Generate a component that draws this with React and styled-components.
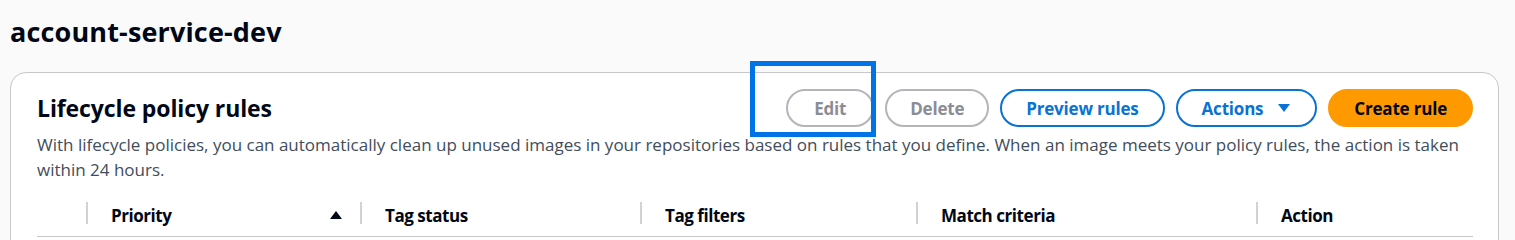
import React from 'react'
import styled, { createGlobalStyle } from 'styled-components'

const GlobalStyle = createGlobalStyle`
  body {
    margin: 0;
    background: #fafafa;
    font-family: "Open Sans", "Noto Sans", sans-serif;
    color: #000716;
  }
`

const columns = [
  { label: '', width: 49 },
  { label: 'Priority', width: 274, sorted: true },
  { label: 'Tag status', width: 280 },
  { label: 'Tag filters', width: 276 },
  { label: 'Match criteria', width: 340 },
  { label: 'Action' },
]

const App = () => {
  return (
    <Page>
      <GlobalStyle />
      <PageTitle>account-service-dev</PageTitle>
      <Card>
        <CardHeader>
          <HeaderTitle>Lifecycle policy rules</HeaderTitle>
          <Actions>
            <FocusWrap>
              <Button disabled pad={26}>Edit</Button>
              <FocusRing />
            </FocusWrap>
            <Button disabled pad={23}>Delete</Button>
            <Button>Preview rules</Button>
            <Button>
              Actions
              <Caret viewBox="0 0 14 10">
                <path d="M1 1h12L7 9z" fill="currentColor" />
              </Caret>
            </Button>
            <Button primary>Create rule</Button>
          </Actions>
        </CardHeader>
        <Description>
          With lifecycle policies, you can automatically clean up unused images in your repositories based on rules that you define. When an image meets your policy rules, the action is taken within 24 hours.
        </Description>
        <Table>
          {columns.map((col, i) => (
            <HeadCell key={i} width={col.width} divider={i > 0}>
              {col.label}
              {col.sorted && (
                <SortIcon viewBox="0 0 14 10">
                  <path d="M7 1l6 8H1z" fill="currentColor" />
                </SortIcon>
              )}
            </HeadCell>
          ))}
        </Table>
      </Card>
    </Page>
  )
}

const Page = styled.div`
  padding: 13px 16px 0 10px;
`

const PageTitle = styled.h1`
  margin: 0 0 22px;
  font-size: 27px;
  line-height: 37px;
  font-weight: 700;
  letter-spacing: 0.15px;
`

const Card = styled.div`
  background: #fff;
  border: 1px solid #c6c6cd;
  border-radius: 16px;
  padding: 16px 25px 0 26px;
  height: 200px;
`

const CardHeader = styled.div`
  display: flex;
  align-items: center;
  justify-content: space-between;
`

const HeaderTitle = styled.h2`
  margin: 0;
  font-size: 23px;
  font-weight: 700;
  letter-spacing: -0.1px;
`

const Actions = styled.div`
  display: flex;
  align-items: center;
  gap: 11px;
`

const FocusWrap = styled.div`
  position: relative;
  display: flex;
`

const FocusRing = styled.div`
  position: absolute;
  left: -36px;
  top: -28px;
  width: 116px;
  height: 66px;
  border: 5px solid #0073e6;
  pointer-events: none;
`

const Button = styled.button`
  display: inline-flex;
  align-items: center;
  gap: 14px;
  height: 38px;
  padding: 0 ${p => p.pad || 24}px;
  border-radius: 20px;
  font-family: inherit;
  font-size: 17px;
  font-weight: 700;
  letter-spacing: -0.2px;
  cursor: pointer;
  border: 2px solid ${p => (p.disabled ? '#b4b4bb' : p.primary ? '#ff9900' : '#0972d3')};
  background: ${p => (p.primary ? '#ff9900' : '#fff')};
  color: ${p => (p.disabled ? '#8c8c94' : p.primary ? '#000716' : '#0972d3')};
`

const Caret = styled.svg`
  width: 14px;
  height: 10px;
`

const Description = styled.p`
  margin: 5px 0 0;
  font-size: 17px;
  line-height: 25px;
  color: #414d5c;
`

const Table = styled.div`
  display: flex;
  margin-top: 12px;
  height: 42px;
  border-bottom: 1px solid #c6c6cd;
`

const HeadCell = styled.div`
  position: relative;
  display: flex;
  align-items: center;
  justify-content: space-between;
  box-sizing: border-box;
  ${p => (p.width ? `width: ${p.width}px;` : 'flex: 1;')}
  padding: 0 17px 0 25px;
  font-size: 17px;
  font-weight: 700;
  letter-spacing: -0.45px;
  &::before {
    content: '';
    display: ${p => (p.divider ? 'block' : 'none')};
    position: absolute;
    left: 0;
    top: 8px;
    bottom: 12px;
    width: 2px;
    background: #d1d1d6;
  }
`

const SortIcon = styled.svg`
  width: 14px;
  height: 10px;
`

export default App
